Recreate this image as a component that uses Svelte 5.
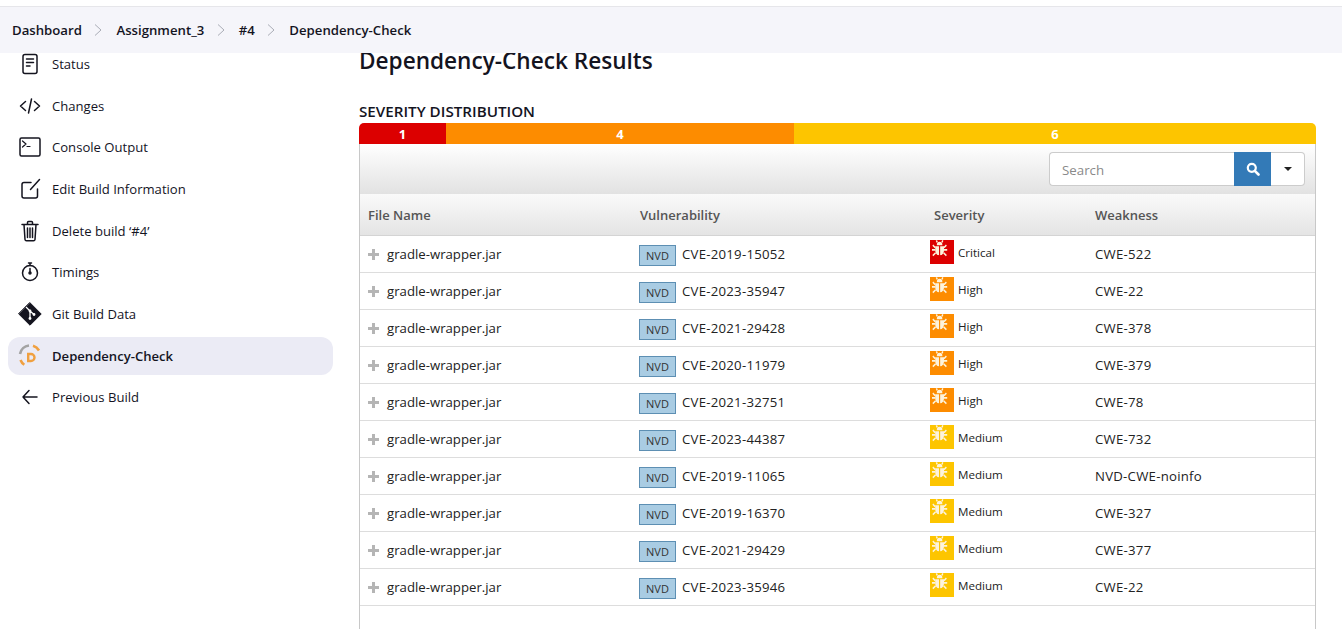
<script>
    const crumbs = ["Dashboard", "Assignment_3", "#4", "Dependency-Check"];

    const tasks = [
        { icon: "status", label: "Status" },
        { icon: "changes", label: "Changes" },
        { icon: "console", label: "Console Output" },
        { icon: "edit", label: "Edit Build Information" },
        { icon: "trash", label: "Delete build ‘#4’" },
        { icon: "timer", label: "Timings" },
        { icon: "git", label: "Git Build Data" },
        { icon: "dep", label: "Dependency-Check", active: true },
        { icon: "back", label: "Previous Build" },
    ];

    const severityColor = {
        Critical: "#dc0000",
        High: "#fd8c00",
        Medium: "#fdc500",
    };

    const rows = [
        { cve: "CVE-2019-15052", severity: "Critical", cwe: "CWE-522" },
        { cve: "CVE-2023-35947", severity: "High", cwe: "CWE-22" },
        { cve: "CVE-2021-29428", severity: "High", cwe: "CWE-378" },
        { cve: "CVE-2020-11979", severity: "High", cwe: "CWE-379" },
        { cve: "CVE-2021-32751", severity: "High", cwe: "CWE-78" },
        { cve: "CVE-2023-44387", severity: "Medium", cwe: "CWE-732" },
        { cve: "CVE-2019-11065", severity: "Medium", cwe: "NVD-CWE-noinfo" },
        { cve: "CVE-2019-16370", severity: "Medium", cwe: "CWE-327" },
        { cve: "CVE-2021-29429", severity: "Medium", cwe: "CWE-377" },
        { cve: "CVE-2023-35946", severity: "Medium", cwe: "CWE-22" },
    ];
</script>

<div class="page">
    <header class="crumbs">
        {#each crumbs as crumb, i}
            {#if i > 0}
                <svg class="sep" viewBox="0 0 8 12" width="8" height="12"><path d="M1 .5l6 5.500-6 5.500" fill="none" stroke="#a9acb6" stroke-width="1" /></svg>
            {/if}
            <span>{crumb}</span>
        {/each}
    </header>

    <div class="body">
        <nav class="side">
            {#each tasks as task}
                <div class="task">
                    <div class="task-inner" class:active={task.active}>
                        <svg class="ico" viewBox="0 0 24 24" width="24" height="24" fill="none" stroke="#14141f" stroke-width="1.5" stroke-linecap="round" stroke-linejoin="round">
                            {#if task.icon === "status"}
                                <rect x="5" y="2.500" width="14" height="19" rx="2" />
                                <path d="M8.500 7h7M8.500 10.500h7M8.500 14h3.500" />
                            {:else if task.icon === "changes"}
                                <path d="M7.500 7.500L2.500 12l5 4.500M16.500 7.500l5 4.500-5 4.500M13.500 5L10.500 19" />
                            {:else if task.icon === "console"}
                                <rect x="2" y="3" width="20" height="18" rx="1.500" />
                                <path d="M4.500 6l3.500 3-3.500 3M9 11.500h3" stroke-width="1.200" />
                            {:else if task.icon === "edit"}
                                <path d="M13 5.500H6a2 2 0 0 0-2 2V19a2 2 0 0 0 2 2h11.500a2 2 0 0 0 2-2v-7M12.500 12.500L21.500 2.500" />
                            {:else if task.icon === "trash"}
                                <path d="M4 5.500h16M9.500 5V3.500a1 1 0 0 1 1-1h3a1 1 0 0 1 1 1V5M6 5.500l1 15a1.500 1.500 0 0 0 1.500 1.300h7a1.500 1.500 0 0 0 1.500-1.300l1-15M9.500 9v9.500M12 9v9.500M14.500 9v9.500" />
                            {:else if task.icon === "timer"}
                                <circle cx="12" cy="13" r="7.500" />
                                <path d="M10.500 3h3M12 3v2.500M12 8.500v4.500" />
                                <circle cx="12" cy="13" r="1" />
                            {:else if task.icon === "git"}
                                <path d="M12 .8L23.200 12 12 23.200.8 12z" fill="#14141f" stroke="#14141f" stroke-width="1" />
                                <path d="M8.500 5.500l3.500 3.500v7M12 9l4 3.500" stroke="#fff" stroke-width="1.300" />
                                <circle cx="12" cy="9" r="1.400" fill="#fff" stroke="none" />
                                <circle cx="12" cy="16.500" r="1.400" fill="#fff" stroke="none" />
                                <circle cx="16" cy="12.500" r="1.400" fill="#fff" stroke="none" />
                            {:else if task.icon === "dep"}
                                <path d="M2 10A10.500 10.500 0 0 1 11 1.500" stroke="#a3a3a3" stroke-width="2.600" stroke-linecap="butt" />
                                <path d="M15 1.800A10.500 10.500 0 0 1 21 6.500M2.500 16a10.500 10.500 0 0 0 3.800 4.800" stroke="#f0a040" stroke-width="2.600" stroke-linecap="butt" />
                                <path d="M10.200 10h2.800a3.500 3.500 0 0 1 0 7h-2.800z" stroke="#f0a040" stroke-width="2.400" stroke-linejoin="miter" />
                            {:else if task.icon === "back"}
                                <path d="M19 12H5M11 5.500L5 12l6 6.500" />
                            {/if}
                        </svg>
                        <span>{task.label}</span>
                    </div>
                </div>
            {/each}
        </nav>

        <main class="main">
            <h1>Dependency-Check Results</h1>
            <h2>SEVERITY DISTRIBUTION</h2>

            <div class="bar">
                <div class="seg crit">1</div>
                <div class="seg high">4</div>
                <div class="seg med">6</div>
            </div>

            <div class="panel">
                <div class="toolbar">
                    <div class="search">
                        <input placeholder="Search" />
                        <button class="go" aria-label="Search">
                            <svg viewBox="0 0 14 14" width="14" height="14"><circle cx="5.800" cy="5.800" r="4" fill="none" stroke="#fff" stroke-width="2.200" /><path d="M8.800 8.800l3.700 3.700" stroke="#fff" stroke-width="2.600" stroke-linecap="round" /></svg>
                        </button>
                        <button class="more" aria-label="Options"><i></i></button>
                    </div>
                </div>

                <table>
                    <thead>
                        <tr>
                            <th class="c1">File Name</th>
                            <th class="c2">Vulnerability</th>
                            <th class="c3">Severity</th>
                            <th>Weakness</th>
                        </tr>
                    </thead>
                    <tbody>
                        {#each rows as row}
                            <tr>
                                <td>
                                    <span class="plus"></span>gradle-wrapper.jar
                                </td>
                                <td>
                                    <div class="vuln"><span class="nvd">NVD</span><span class="code">{row.cve}</span></div>
                                </td>
                                <td class="sev">
                                    <div class="sev-box">
                                        <svg viewBox="0 0 24 24" width="24" height="24">
                                            <rect width="24" height="24" fill={severityColor[row.severity]} />
                                            <g transform="translate(0 -1) scale(.8 .95)" fill="#fdf3dc" stroke="#fdf3dc">
                                                <path d="M8.500 6.500a3.500 3.500 0 0 1 7 0z" stroke="none" />
                                                <path d="M6.500 7.500h4.800v9.500c-2.800 0-4.800-2.200-4.800-5zM12.700 7.500h4.800V12c0 2.800-2 5-4.800 5z" stroke="none" />
                                                <path d="M6.500 9L3.500 6.500M6.500 11.500H2.500M7 14.500l-3.500 3M17.500 9l3-2.500M17.500 11.500h4M17 14.500l3.500 3M9 3.500L8 1.500M15 3.500l1-2" stroke-width="1.800" fill="none" />
                                            </g>
                                        </svg>
                                        <span>{row.severity}</span>
                                    </div>
                                </td>
                                <td><span class="code">{row.cwe}</span></td>
                            </tr>
                        {/each}
                    </tbody>
                </table>
            </div>
        </main>
    </div>
</div>

<style>
    :global(body) {
        margin: 0;
        background: #fff;
        overflow: hidden;
    }
    .page {
        height: 629px;
        overflow: hidden;
        font-family: "Open Sans", "Noto Sans", sans-serif;
        color: #14141f;
        padding-top: 6px;
        box-sizing: border-box;
    }

    .crumbs {
        position: relative;
        z-index: 2;
        height: 47px;
        box-sizing: border-box;
        border-top: 1px solid #e6e6ea;
        background: #f5f5fa;
        display: flex;
        align-items: center;
        padding: 0 12px;
        font-size: 13.2px;
        font-weight: 600;
    }
    .sep {
        margin: 0 14px 0 12.5px;
    }

    .body {
        display: flex;
        margin-top: -10px;
    }

    .side {
        width: 359px;
        flex: none;
        padding-left: 8px;
        box-sizing: border-box;
    }
    .task {
        height: 41.7px;
        width: 325px;
        display: flex;
        align-items: center;
    }
    .task-inner {
        flex: 1;
        height: 38px;
        border-radius: 12px;
        display: flex;
        align-items: center;
        gap: 10px;
        padding-left: 10px;
        font-size: 13.1px;
    }
    .task-inner.active {
        background: #ebebf5;
        font-weight: 600;
    }
    .ico {
        flex: none;
    }

    .main {
        width: 957px;
        flex: none;
    }
    h1 {
        margin: 0;
        height: 58px;
        box-sizing: border-box;
        padding-top: 2px;
        font-size: 22.6px;
        line-height: 32px;
        font-weight: 600;
    }
    h2 {
        margin: 0;
        font-size: 15.2px;
        line-height: 20px;
        font-weight: 600;
    }

    .bar {
        display: flex;
        height: 21px;
        margin-top: 2px;
        border-radius: 5px 5px 0 0;
        overflow: hidden;
        color: #fff;
        font-size: 13px;
        font-weight: 700;
        line-height: 23px;
        text-align: center;
    }
    .seg.crit {
        width: 87px;
        background: #dc0000;
    }
    .seg.high {
        width: 348px;
        background: #fd8c00;
    }
    .seg.med {
        flex: 1;
        background: #fdc500;
    }

    .panel {
        border: 1px solid #c8c8c8;
        border-width: 0 1px;
        height: 500px;
    }
    .toolbar {
        height: 50px;
        background: linear-gradient(#fff, #e2e2e2);
        display: flex;
        justify-content: flex-end;
        align-items: center;
        padding-right: 10px;
    }
    .search {
        display: flex;
        height: 34px;
    }
    .search input {
        width: 185px;
        box-sizing: border-box;
        border: 1px solid #ccc;
        border-right: 0;
        border-radius: 4px 0 0 4px;
        padding: 1px 12px 0;
        font: 13.3px "Open Sans", sans-serif;
        outline: 0;
    }
    .search input::placeholder {
        color: #8a8a8a;
    }
    .go {
        width: 37px;
        border: 0;
        padding: 0;
        background: #337ab7;
        display: flex;
        align-items: center;
        justify-content: center;
    }
    .more {
        width: 34px;
        padding: 0;
        background: #fff;
        border: 1px solid #ccc;
        border-left: 0;
        border-radius: 0 4px 4px 0;
        display: flex;
        align-items: center;
        justify-content: center;
    }
    .more i {
        border: 4px solid transparent;
        border-top-color: #222;
        border-bottom: 0;
    }

    table {
        width: 100%;
        table-layout: fixed;
        border-collapse: collapse;
        font-size: 13.2px;
    }
    th {
        height: 41px;
        padding: 0 8px;
        text-align: left;
        color: #555;
        font-size: 13px;
        font-weight: 600;
        background: linear-gradient(#fafafa, #e4e4e4);
        border-bottom: 1px solid #d4d4d4;
    }
    .c1 {
        width: 256px;
    }
    .c2 {
        width: 278px;
    }
    .c3 {
        width: 145px;
    }
    td {
        height: 36px;
        padding: 0 8px;
        border-bottom: 1px solid #ddd;
        color: #222;
    }
    .code {
        letter-spacing: 0.25px;
    }
    .plus {
        display: inline-block;
        width: 11px;
        height: 11px;
        margin-right: 8px;
        vertical-align: -1px;
        background:
            linear-gradient(#b5b5b5, #b5b5b5) center / 11px 3px no-repeat,
            linear-gradient(#b5b5b5, #b5b5b5) center / 3px 11px no-repeat;
    }
    .vuln {
        display: flex;
        align-items: center;
        margin-left: -1px;
    }
    .nvd {
        width: 37px;
        height: 21px;
        margin: 3px 6px 0 0;
        box-sizing: border-box;
        background: #a9cce3;
        border: 1px solid #5d8fb3;
        color: #333;
        font-size: 11px;
        line-height: 20px;
        text-align: center;
    }
    td.sev {
        padding: 0 0 0 4px;
        vertical-align: top;
    }
    .sev-box {
        display: flex;
        gap: 4px;
        margin-top: 4px;
        height: 24px;
        font-size: 11.6px;
    }
    .sev-box span {
        line-height: 26px;
    }
</style>
